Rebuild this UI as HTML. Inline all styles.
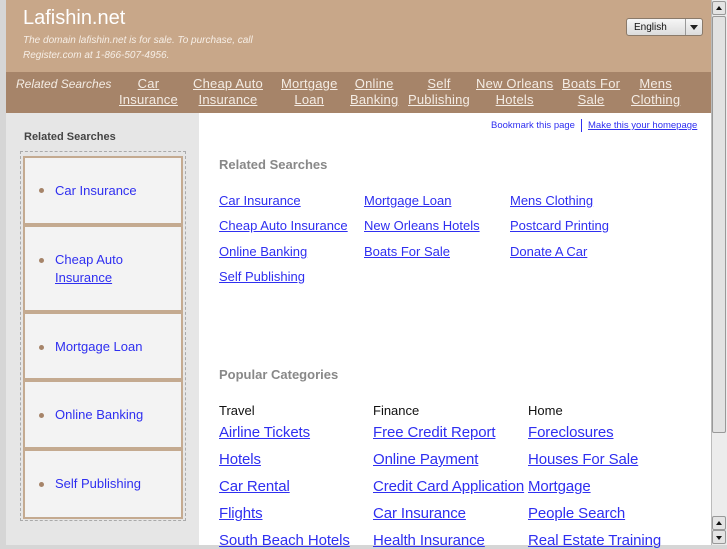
<!DOCTYPE html>
<html><head><meta charset="utf-8"><style>
*{margin:0;padding:0;box-sizing:border-box}
body{width:727px;height:545px;overflow:hidden;background:#d6d6d6;font-family:"Liberation Sans",sans-serif;position:relative}
.a{position:absolute;white-space:nowrap}
a{color:#2f2ff0;text-decoration:underline}
#hdr{left:6px;top:0;width:705px;height:72px;background:#c8a789}
#nav{left:6px;top:72px;width:705px;height:41px;background:#a68469}
.nv{position:absolute;top:4px;color:#f4ece4;font-size:13px;line-height:16px;text-align:center;text-decoration:underline;letter-spacing:.2px}
#side{left:6px;top:113px;width:193px;height:432px;background:#e6e6e6}
#main{left:199px;top:113px;width:512px;height:432px;background:#fff}
.box{position:absolute;left:23px;width:160px;background:#f3f3f3;border:2px solid #c4aa90}
.box span{position:absolute;left:30px;font-size:13px;color:#2f2ff0;line-height:18px}
.box i{position:absolute;left:14px;width:5px;height:5px;border-radius:50%;background:#a68469}
.l13{font-size:13px}
.l15{font-size:15px;letter-spacing:-.1px}
</style></head><body>
<div class="a" id="hdr"></div>
<div class="a" style="left:23px;top:7px;font-size:20px;color:#fff">Lafishin.net</div>
<div class="a" style="left:23px;top:33px;font-size:10px;color:#f6eee6;font-style:italic;line-height:15px">The domain lafishin.net is for sale. To purchase, call<br>Register.com at 1-866-507-4956.</div>
<div class="a" style="left:626px;top:18px;width:77px;height:18px;background:linear-gradient(#f6f6f6,#dcdcdc);border:1px solid #8a7a6a;border-radius:3px;font-size:10px;color:#111;padding:3px 0 0 7px">English<span style="position:absolute;left:58px;top:0;width:1px;height:16px;background:#999"></span><span style="position:absolute;left:63px;top:6px;border:4px solid transparent;border-top:5px solid #222;border-bottom:0"></span></div>
<div class="a" id="nav">
<div class="nv" style="left:10px;text-decoration:none;font-style:italic;font-size:12px;letter-spacing:0">Related Searches</div>
<div class="nv" style="left:113px">Car<br>Insurance</div>
<div class="nv" style="left:187px">Cheap Auto<br>Insurance</div>
<div class="nv" style="left:275px">Mortgage<br>Loan</div>
<div class="nv" style="left:344px">Online<br>Banking</div>
<div class="nv" style="left:402px">Self<br>Publishing</div>
<div class="nv" style="left:470px">New Orleans<br>Hotels</div>
<div class="nv" style="left:556px">Boats For<br>Sale</div>
<div class="nv" style="left:625px">Mens<br>Clothing</div>
</div>
<div class="a" id="side"></div>
<div class="a" style="left:24px;top:131px;font-size:11px;font-weight:bold;color:#444">Related Searches</div>
<div class="a" style="left:20px;top:151px;width:166px;height:370px;border:1px dashed #aaa"></div>
<div class="box" style="top:156px;height:69px"><i style="top:30px"></i><span style="top:24px">Car Insurance</span></div>
<div class="box" style="top:225px;height:87px"><i style="top:31px"></i><span style="top:24px">Cheap Auto<br><u>Insurance</u></span></div>
<div class="box" style="top:312px;height:68px"><i style="top:31px"></i><span style="top:24px">Mortgage Loan</span></div>
<div class="box" style="top:380px;height:69px"><i style="top:31px"></i><span style="top:24px">Online Banking</span></div>
<div class="box" style="top:449px;height:70px"><i style="top:31px"></i><span style="top:24px">Self Publishing</span></div>
<div class="a" id="main"></div>
<div class="a" style="left:491px;top:120px;font-size:9.5px;color:#2f2ff0">Bookmark this page</div>
<div class="a" style="left:581px;top:119px;width:1px;height:13px;background:#2f2ff0"></div>
<div class="a" style="left:588px;top:120px;font-size:9.5px"><a>Make this your homepage</a></div>
<div class="a" style="left:219px;top:157px;font-size:13px;font-weight:bold;color:#888">Related Searches</div>
<a class="a l13" style="left:219px;top:193px">Car Insurance</a>
<a class="a l13" style="left:219px;top:218px">Cheap Auto Insurance</a>
<a class="a l13" style="left:219px;top:244px">Online Banking</a>
<a class="a l13" style="left:219px;top:269px">Self Publishing</a>
<a class="a l13" style="left:364px;top:193px">Mortgage Loan</a>
<a class="a l13" style="left:364px;top:218px">New Orleans Hotels</a>
<a class="a l13" style="left:364px;top:244px">Boats For Sale</a>
<a class="a l13" style="left:510px;top:193px">Mens Clothing</a>
<a class="a l13" style="left:510px;top:218px">Postcard Printing</a>
<a class="a l13" style="left:510px;top:244px">Donate A Car</a>
<div class="a" style="left:219px;top:367px;font-size:13px;font-weight:bold;color:#888">Popular Categories</div>
<div class="a" style="left:219px;top:403px;font-size:13px;color:#111">Travel</div>
<div class="a" style="left:373px;top:403px;font-size:13px;color:#111">Finance</div>
<div class="a" style="left:528px;top:403px;font-size:13px;color:#111">Home</div>
<a class="a l15" style="left:219px;top:424px">Airline Tickets</a>
<a class="a l15" style="left:219px;top:451px">Hotels</a>
<a class="a l15" style="left:219px;top:478px">Car Rental</a>
<a class="a l15" style="left:219px;top:505px">Flights</a>
<a class="a l15" style="left:219px;top:532px">South Beach Hotels</a>
<a class="a l15" style="left:373px;top:424px">Free Credit Report</a>
<a class="a l15" style="left:373px;top:451px">Online Payment</a>
<a class="a l15" style="left:373px;top:478px">Credit Card Application</a>
<a class="a l15" style="left:373px;top:505px">Car Insurance</a>
<a class="a l15" style="left:373px;top:532px">Health Insurance</a>
<a class="a l15" style="left:528px;top:424px">Foreclosures</a>
<a class="a l15" style="left:528px;top:451px">Houses For Sale</a>
<a class="a l15" style="left:528px;top:478px">Mortgage</a>
<a class="a l15" style="left:528px;top:505px">People Search</a>
<a class="a l15" style="left:528px;top:532px">Real Estate Training</a>
<div class="a" style="left:711px;top:0;width:16px;height:545px;background:#ececec;border-left:1px solid #bbb"></div>
<div class="a" style="left:712px;top:1px;width:14px;height:14px;background:#e4e4e4;border:1px solid #999;border-radius:2px"><span style="position:absolute;left:3px;top:4px;border:3px solid transparent;border-bottom:4px solid #111;border-top:0"></span></div>
<div class="a" style="left:712px;top:16px;width:14px;height:417px;background:#e2e2e2;border:1px solid #999;border-radius:2px"></div>
<div class="a" style="left:712px;top:516px;width:14px;height:14px;background:#e4e4e4;border:1px solid #999;border-radius:2px"><span style="position:absolute;left:3px;top:4px;border:3px solid transparent;border-bottom:4px solid #111;border-top:0"></span></div>
<div class="a" style="left:712px;top:530px;width:14px;height:14px;background:#e4e4e4;border:1px solid #999;border-radius:2px"><span style="position:absolute;left:3px;top:5px;border:3px solid transparent;border-top:4px solid #111;border-bottom:0"></span></div>
</body></html>
